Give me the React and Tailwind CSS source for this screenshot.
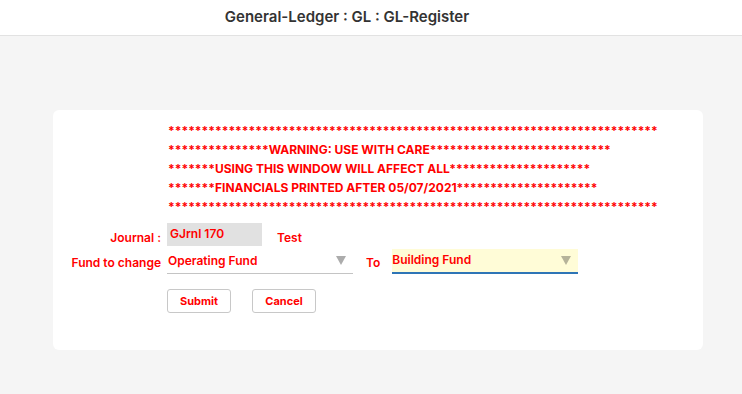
import React from 'react';

const stars = (n) => '*'.repeat(n);

const Arrow = ({ color }) => (
  <svg width="10" height="9" viewBox="0 0 10 9" className="shrink-0">
    <path d="M0 0 L10 0 L5 9 Z" fill={color} />
  </svg>
);

const GLRegister = () => {
  const warnings = [
    stars(73),
    stars(15) + 'WARNING: USE WITH CARE' + stars(27),
    stars(7) + 'USING THIS WINDOW WILL AFFECT ALL' + stars(21),
    stars(7) + 'FINANCIALS PRINTED AFTER 05/07/2021' + stars(21),
    stars(73),
  ];

  return (
    <div className="min-h-screen bg-[#f5f5f5] font-['Inter',sans-serif]">
      {/* Header */}
      <div className="h-[36px] bg-white border-b border-[#e2e2e2] flex items-center justify-center pr-[48px]">
        <h1 className="text-[15px] font-semibold text-[#333333]">General-Ledger : GL : GL-Register</h1>
      </div>

      {/* Card */}
      <div className="pt-[74px] pl-[53px] pr-[39px]">
        <div className="bg-white rounded-[6px] h-[240px] pt-[11px]">
          <div className="pl-[115px] text-[12px] font-bold text-[#ff0000] leading-[19px]">
            {warnings.map((w, i) => (
              <div key={i} className="whitespace-nowrap">{w}</div>
            ))}
          </div>

          <div className="mt-[6px] text-[12px] font-semibold text-[#ff0000]">
            {/* Journal row */}
            <div className="flex items-center">
              <div className="w-[108px] text-right pt-[7px]">Journal :</div>
              <div className="ml-[6px] w-[95px] h-[23px] bg-[#e1e1e1] pl-[3px] flex items-center pb-[1px]">GJrnl 170</div>
              <div className="ml-[15px] pt-[7px]">Test</div>
            </div>

            {/* Fund row */}
            <div className="flex items-center mt-[2px]">
              <div className="w-[108px] text-right pt-[3px]">Fund to change</div>
              <div className="ml-[6px] w-[186px] h-[24px] border-b border-[#c4c4c4] flex items-center justify-between pl-[1px] pr-[7px] pb-[1px]">
                <span>Operating Fund</span>
                <Arrow color="#acacac" />
              </div>
              <div className="ml-[13px] pt-[3px]">To</div>
              <div className="ml-[12px] w-[186px] h-[25px] bg-[#fffcd7] border-b-2 border-[#2e75b6] flex items-center justify-between pr-[7px] pb-[1px]">
                <span>Building Fund</span>
                <Arrow color="#b6b39a" />
              </div>
            </div>

            {/* Buttons */}
            <div className="flex gap-[21px] ml-[114px] mt-[15px]">
              <button className="w-[64px] h-[24px] border border-[#c8c8c8] rounded-[3px] bg-white text-[11px] font-bold text-[#ff0000]">Submit</button>
              <button className="w-[64px] h-[24px] border border-[#c8c8c8] rounded-[3px] bg-white text-[11px] font-bold text-[#ff0000]">Cancel</button>
            </div>
          </div>
        </div>
      </div>
    </div>
  );
};

export default function App() {
  return <GLRegister />;
}
